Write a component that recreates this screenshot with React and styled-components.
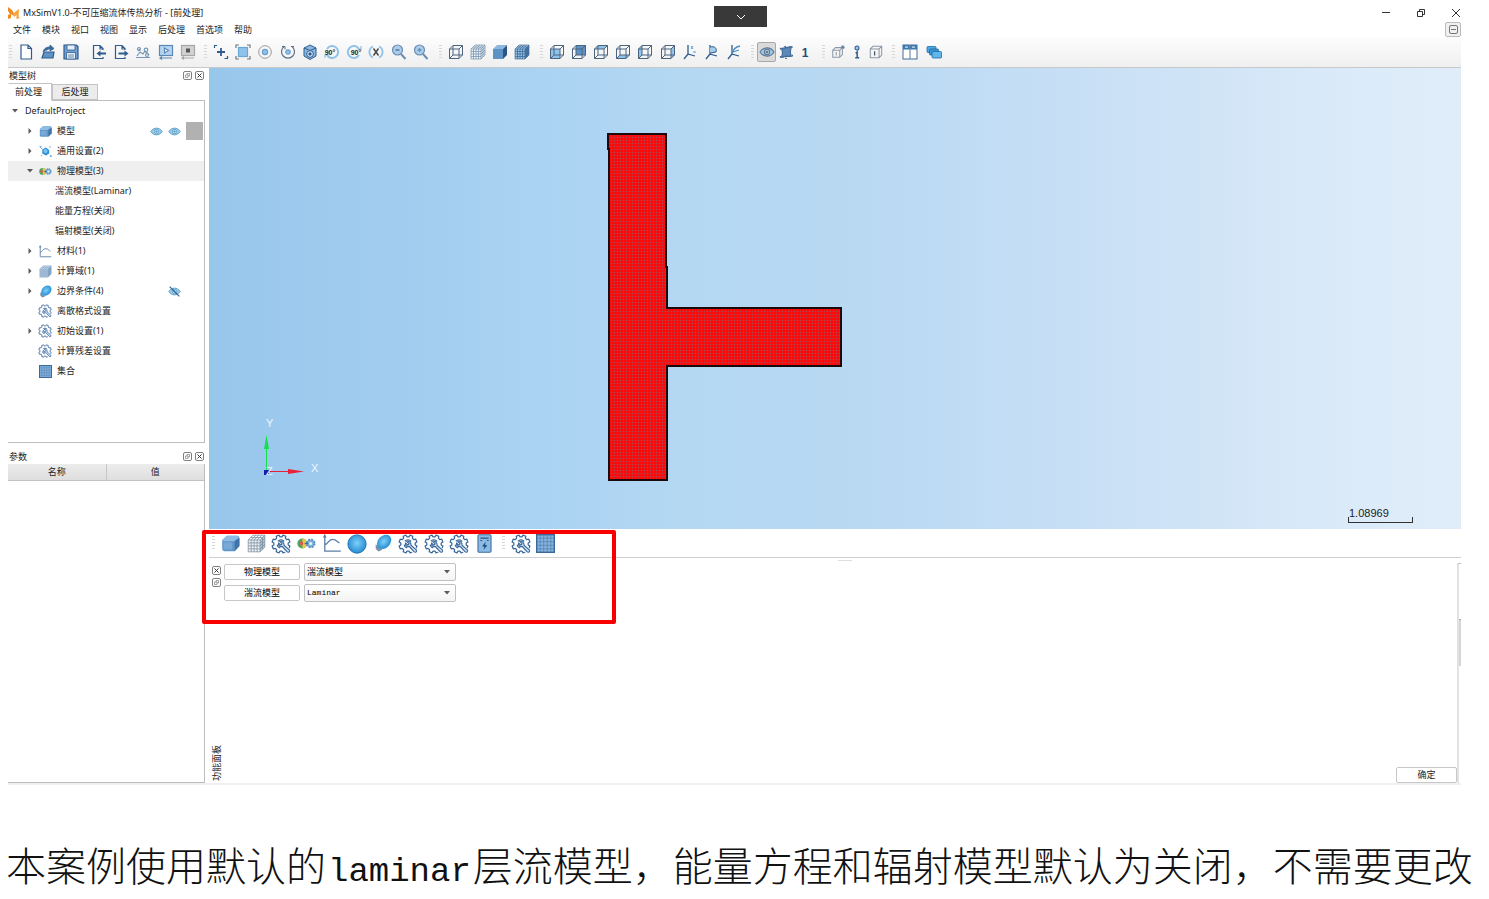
import React from "react";
import styled, { createGlobalStyle, css } from "styled-components";

const GlobalStyle = createGlobalStyle`
  *, *::before, *::after { box-sizing: border-box; }
  body {
    margin: 0;
    background: #fff;
    color: #222;
    font: 9px/12px "Noto Sans", "Noto Sans CJK SC", sans-serif;
  }
  button, select, input { font: inherit; color: inherit; margin: 0; }
`;

const ink = "#2f5c8f";
const wire = "#4c6480";
const sky = "#8fc3ea";

/* ---------- layout ---------- */

const Page = styled.div`
  display: flex;
  flex-direction: column;
  min-height: 100vh;
`;

const AppWindow = styled.main`
  position: relative;
  flex: 1;
  display: flex;
  flex-direction: column;
  margin: 0 28px 0 8px;
  border-bottom: 2px solid #efefef;
`;

const TitleBar = styled.header`
  display: flex;
  align-items: center;
  gap: 3px;
  height: 22px;
  padding-top: 4px;
`;

const Title = styled.h1`
  flex: 1;
  margin: 0;
  font-size: 9px;
  font-weight: 400;
`;

const WindowButtons = styled.div`
  display: flex;
  gap: 25px;
`;

const BareButton = styled.button`
  display: grid;
  place-items: center;
  width: 10px;
  height: 10px;
  padding: 0;
  border: 0;
  background: none;
`;

const MenuBar = styled.nav`
  display: flex;
  align-items: center;
  gap: 11px;
  height: 15px;
  padding-left: 5px;
`;

const MenuItem = styled.button`
  padding: 0;
  border: 0;
  background: none;
`;

const MdiButton = styled.button`
  display: grid;
  place-items: center;
  width: 16px;
  height: 15px;
  margin-left: auto;
  padding: 0;
  border: 1px solid #bcbcbc;
  border-radius: 2px;
  background: #f0f0f0;
`;

const PullTab = styled.button`
  position: absolute;
  top: 6px;
  left: 706px;
  display: grid;
  place-items: center;
  width: 53px;
  height: 21px;
  padding: 0;
  border: 0;
  background: #393939;
`;

const Toolbar = styled.div`
  display: flex;
  align-items: center;
  height: ${(p) => p.$height}px;
  flex: none;
  ${(p) =>
    p.$shaded &&
    css`
      background: linear-gradient(#fdfdfd, #efefef);
      border-bottom: 1px solid #c9c9c9;
    `}
`;

const Handle = styled.span`
  flex: none;
  width: ${(p) => p.$width}px;
  height: 14px;
  background: repeating-linear-gradient(#d6d6d6 0 1px, transparent 1px 3px) right 3px top / 3px 14px no-repeat;
`;

const Group = styled.div`
  display: grid;
  grid-auto-flow: column;
  grid-auto-columns: 1fr;
  width: ${(p) => p.$width}px;
`;

const ToolButton = styled.button`
  display: grid;
  place-items: center;
  height: 20px;
  padding: 0;
  border: 1px solid ${(p) => (p.$on ? "#a8a8a8" : "transparent")};
  border-radius: 2px;
  background: ${(p) => (p.$on ? "#dadada" : "none")};
`;

const Gap = styled.span`
  width: 6px;
`;

const Body = styled.div`
  flex: 1;
  display: flex;
  gap: 4px;
`;

const SideColumn = styled.aside`
  flex: none;
  display: flex;
  flex-direction: column;
  width: 197px;
`;

const MainColumn = styled.section`
  flex: 1;
  min-width: 0;
  display: flex;
  flex-direction: column;
`;

const PanelHead = styled.div`
  display: flex;
  align-items: center;
  gap: 2px;
  height: 15px;
  padding: 0 1px;
`;

const PanelTitle = styled.h2`
  flex: 1;
  margin: 0;
  font-size: 9px;
  font-weight: 400;
`;

const Tabs = styled.div`
  display: flex;
  align-items: flex-end;
  height: 17px;
`;

const Tab = styled.button`
  position: relative;
  width: ${(p) => (p.$active ? 44 : 46)}px;
  height: ${(p) => (p.$active ? 18 : 16)}px;
  padding: 0 ${(p) => (p.$active ? 3 : 0)}px 0 0;
  border: 1px solid #c4c4c4;
  border-bottom-color: ${(p) => (p.$active ? "#fff" : "#c4c4c4")};
  border-left-color: ${(p) => (p.$active ? "#fff" : "#c4c4c4")};
  background: ${(p) => (p.$active ? "#fff" : "#ececec")};
  margin-bottom: ${(p) => (p.$active ? -1 : 0)}px;
`;

const Tree = styled.ul`
  flex: 1;
  margin: 0 0 6px;
  padding: 0;
  list-style: none;
  border: 1px solid #bdbdbd;
  border-left: 0;
`;

const TreeRow = styled.li`
  display: flex;
  align-items: center;
  gap: 4px;
  height: 20px;
  padding: 0 1px 0 ${(p) => p.$indent}px;
  background: ${(p) => (p.$selected ? "#efefef" : "none")};
`;

const RootRow = styled(TreeRow)`
  gap: 7px;
`;

const TreeLabel = styled.span`
  flex: 1;
  white-space: nowrap;
`;

const Slot = styled.span`
  display: grid;
  place-items: center;
  width: ${(p) => p.$width}px;
`;

const RowEnd = styled.span`
  display: flex;
  align-items: center;
  gap: 5px;
`;

const Swatch = styled.span`
  width: 17px;
  height: 18px;
  background: #b1b1b1;
`;

const Params = styled.div`
  display: flex;
  flex-direction: column;
  height: 334px;
  flex: none;
`;

const ParamBody = styled.div`
  flex: 1;
  border-right: 1px solid #bdbdbd;
  border-bottom: 1px solid #bdbdbd;
`;

const ParamTable = styled.table`
  width: 100%;
  border-collapse: collapse;
  table-layout: fixed;

  th {
    height: 16px;
    padding: 0;
    font-weight: 400;
    background: linear-gradient(#ececec, #dedede);
    border-bottom: 1px solid #c2c2c2;
  }
  th + th { border-left: 1px solid #c6c6c6; }
`;

/* ---------- viewport ---------- */

const Viewport = styled.div`
  position: relative;
  flex: 1;
  min-height: 400px;
  background: linear-gradient(90deg, #98c7ec 0%, #9fcbee 12%, #add4f3 30%, #b4d8f2 38%, #bad9f3 54%, #cde2f6 76%, #dcebf9 92%, #e0edf9 100%);
`;

const Scene = styled.svg`
  position: absolute;
  inset: 0;
  width: 100%;
  height: 100%;
`;

const Triad = styled.svg`
  position: absolute;
  left: 48px;
  bottom: 48px;
`;

const ScaleBar = styled.div`
  position: absolute;
  right: 48px;
  bottom: 6px;
  width: 65px;
  height: 18px;
  padding-left: 1px;
  color: #222;
  font: 11px/16px "Liberation Sans", Arial, sans-serif;

  &::after {
    content: "";
    position: absolute;
    inset: 12px 0 0;
    border: 1px solid #333;
    border-top: 0;
  }
`;

/* ---------- dock ---------- */

const Dock = styled.section`
  position: relative;
  display: flex;
  flex-direction: column;
  height: 254px;
  flex: none;
`;

const Highlight = styled.div`
  position: absolute;
  top: 1px;
  left: -7px;
  width: 414px;
  height: 94px;
  border: 4px solid #f80000;
  border-radius: 2px;
  pointer-events: none;
`;

const DockBody = styled.div`
  flex: 1;
  display: flex;
  border-top: 1px solid #d0d0d0;
`;

const DockSide = styled.div`
  display: flex;
  flex-direction: column;
  align-items: center;
  gap: 2px;
  width: 15px;
  padding: 7px 0 2px;
`;

const SideTitle = styled.h2`
  margin: auto 0 0;
  font-size: 9px;
  font-weight: 400;
  line-height: 12px;
  writing-mode: vertical-rl;
  text-orientation: sideways;
  transform: rotate(180deg);
`;

const DockContent = styled.div`
  position: relative;
  flex: 1;
  display: flex;
  flex-direction: column;
  justify-content: space-between;
  padding: 5px 0 0;

  &::before {
    content: "";
    position: absolute;
    top: 2px;
    left: calc(50% - 3px);
    width: 14px;
    border-top: 1px solid #dedede;
  }
`;

const Form = styled.form`
  display: grid;
  grid-template-columns: 76px 152px;
  gap: 3px 4px;
`;

const FieldLabel = styled.label`
  display: grid;
  place-items: center;
  align-self: center;
  height: 16px;
  border: 1px solid #c8c8c8;
  border-radius: 2px;
  background: #fff;
  color: #000;
`;

const SelectBox = styled.div`
  display: grid;
  align-items: center;

  > * { grid-area: 1 / 1; }
  > svg { justify-self: end; margin-right: 6px; pointer-events: none; }
`;

const Select = styled.select`
  width: 100%;
  height: 18px;
  padding: 0 2px;
  appearance: none;
  border: 1px solid #c0c0c0;
  border-radius: 2px;
  background: linear-gradient(#fff, #f4f4f4);
  color: #000;
  ${(p) => p.$mono && css`font: 8px/12px "Liberation Mono", monospace;`}
`;

const OkButton = styled.button`
  align-self: flex-end;
  width: 61px;
  height: 16px;
  padding: 0;
  border: 1px solid #c8c8c8;
  border-radius: 2px;
  background: #fff;
`;

const ScrollTrack = styled.div`
  width: 4px;
  margin-top: 5px;
  padding-top: 55px;
  border-left: 2px solid #e2e2e2;
  border-top: 1px solid #bdbdbd;
`;

const ScrollThumb = styled.div`
  height: 47px;
  background: #d6d6d6;
  border-top: 1px solid #aaa;
`;

const Caption = styled.p`
  margin: 0;
  padding: 51px 0 0 6px;
  height: 114px;
  color: #111;
  font: 300 40px/56px "Noto Sans CJK SC", sans-serif;
  white-space: nowrap;
`;

const Latin = styled.span`
  margin: 0 2px;
  font: 400 34px/56px "Liberation Mono", monospace;
`;

/* ---------- icons ---------- */

const Ico = ({ size = 16, children, ...rest }) => (
  <svg width={size} height={size} viewBox="0 0 16 16" fill="none" stroke={ink} strokeWidth="1.2" aria-hidden="true" {...rest}>
    {children}
  </svg>
);

const FRONT = "1.5,5 11,5 11,14.5 1.5,14.5";
const BACK = "5,1.5 14.5,1.5 14.5,11 5,11";
const TOP = "1.5,5 5,1.5 14.5,1.5 11,5";
const BOTTOM = "1.5,14.5 5,11 14.5,11 11,14.5";
const LEFT = "1.5,5 5,1.5 5,11 1.5,14.5";
const RIGHT = "11,5 14.5,1.5 14.5,11 11,14.5";

const WireCube = ({ face, tone = sky }) => (
  <Ico stroke={wire} strokeWidth="1">
    {face && <polygon points={face} fill={tone} stroke="none" />}
    <polygon points={FRONT} />
    <polygon points={BACK} />
    <path d="M1.5 5L5 1.5M11 5l3.500-3.500M1.500 14.500L5 11M11 14.500l3.500-3.500" />
  </Ico>
);

const SolidCube = ({ size, front = "#5d92c6", top = "#8db7de", side = "#2c5585", mesh }) => (
  <Ico size={size} stroke="none">
    <polygon points="1,5 11,5 11,15 1,15" fill={front} />
    <polygon points="1,5 5,1 15,1 11,5" fill={top} />
    <polygon points="11,5 15,1 15,11 11,15" fill={side} />
    {mesh && (
      <path
        d="M1 5h10v10H1zM3.500 5v10M6 5v10M8.500 5v10M1 7.500h10l4-4M1 10h10l4-4M1 12.500h10l4-4M3.500 5l4-4M6 5l4-4M8.500 5l4-4M3 3h10v10M1 5l4-4h10v10l-4 4M11 5l4-4"
        stroke={mesh}
        strokeWidth=".6"
      />
    )}
  </Ico>
);

const RoundCube = ({ size }) => (
  <Ico size={size} stroke="none">
    <path d="M5 1.500h8.500q2 0 2 2V10l-4 4.500H3q-2 0-2-2V5z" fill="#5f95c9" />
    <path d="M1 5.500l4-4h8.500q1.500 0 1.700 1L11 6H2z" fill="#8fbce2" />
    <path d="M15.500 3.500V10l-4 4.500V6z" fill="#3f73aa" />
    <rect x="2" y="7" width="7.500" height="6" rx="1" fill="#77a8d6" />
  </Ico>
);

const gearPath = (() => {
  const pts = [];
  const teeth = 8;
  for (let i = 0; i < teeth; i++) {
    const a = ((i + 0.5) / teeth) * Math.PI * 2;
    [[-0.26, 5.8], [-0.16, 7.3], [0.16, 7.3], [0.26, 5.8]].forEach(([d, r]) =>
      pts.push(`${(8 + r * Math.cos(a + d)).toFixed(2)},${(8 + r * Math.sin(a + d)).toFixed(2)}`)
    );
  }
  return "M" + pts.join("L") + "Z";
})();

const GearWrench = ({ size }) => (
  <Ico size={size} stroke="#3b689a" strokeWidth="1" strokeLinejoin="round">
    <path d={gearPath} />
    <path d="M10.500 6A3.300 3.300 0 0 0 5.500 5.800M5 8.500a3.300 3.300 0 0 0 2.500 2.700" />
    <path d="M10.500 10.500l3.500 3.500" stroke="#fff" strokeWidth="4.500" strokeLinecap="round" />
    <path d="M7 6l1.900 1.700-1 1.200L6 7.200c-.3 2.200 1.400 3.300 3 2.800l4 4.300c1.200.8 2.400-.4 1.600-1.600L10.400 9C10.800 7 9 5.300 7 6z" strokeWidth=".9" fill="#cfe1f3" />
  </Ico>
);

const Grid = ({ size }) => (
  <Ico size={size} stroke="#39689b">
    <rect x=".6" y=".6" width="14.800" height="14.800" fill="#86b4de" />
    <path d="M3.500 1v14M6.500 1v14M9.500 1v14M12.500 1v14M1 3.500h14M1 6.500h14M1 9.500h14M1 12.500h14" strokeWidth=".4" />
  </Ico>
);

const Curve = ({ size }) => (
  <Ico size={size} stroke="#5d7fa5" strokeWidth="1.100">
    <path d="M1.500 1v13.500H15M1.500 9C4 9 4.500 4.500 8 4.500S12 7 14 7.500M.5 3l1-2 1 2" />
  </Ico>
);

const Physics = ({ size }) => (
  <Ico size={size} stroke="none">
    <circle cx="4.500" cy="8" r="4.200" fill="#47a86b" />
    <path d="M4.500 3.800a4.200 4.200 0 0 1 0 8.400z" fill="#e8c84c" />
    <circle cx="3.500" cy="8" r="1.800" fill="#d8604a" />
    <circle cx="11.500" cy="8" r="3.300" fill="#7db4dd" stroke="#4e8cbd" strokeWidth="1.400" strokeDasharray="1.600 1" />
    <circle cx="11.500" cy="8" r="1.300" fill="#e8f2fa" />
    <path d="M6.500 8h3" stroke="#3b6ea5" />
  </Ico>
);

const Disc = ({ size, tilt }) => (
  <Ico size={size} stroke="none">
    <defs>
      <radialGradient id="disc" cx=".5" cy=".45" r=".6">
        <stop offset="0" stopColor="#7fd0f7" />
        <stop offset="1" stopColor="#1c86cf" />
      </radialGradient>
    </defs>
    {tilt ? (
      <>
        <path d="M1.500 9l6 5-3.500 1.500L1.500 13z" fill="#7d93a8" />
        <ellipse cx="9" cy="7" rx="7.200" ry="5.400" transform="rotate(-45 9 7)" fill="url(#disc)" />
      </>
    ) : (
      <circle cx="8" cy="8" r="7.300" fill="url(#disc)" stroke="#2673b3" strokeWidth=".8" />
    )}
  </Ico>
);

const Spark = () => (
  <Ico size={13} stroke="none">
    <path d="M4 5.500l4.500-2.500 4 3v4.500l-4 2.500-4.500-2.500z" fill="#2f8fd4" />
    <circle cx="8" cy="7.500" r="2.600" fill="#7cc4f0" />
    <path d="M1 2l3 3M1 2h2" stroke="#5aa4dc" />
    <circle cx="13.500" cy="2.500" r="1" fill="#5aa4dc" />
    <circle cx="14.500" cy="13.500" r="1.300" fill="#5aa4dc" />
    <circle cx="3" cy="13" r=".8" fill="#5aa4dc" />
  </Ico>
);

const Eye = ({ off, size = 13, color = "#5a9fc9" }) => (
  <Ico size={size} stroke={color}>
    <path d="M1 8c3.500-5.500 10.500-5.500 14 0-3.500 5.500-10.500 5.500-14 0z" fill="#9fcdea" />
    <circle cx="8" cy="8" r="2.600" fill="#fff" />
    <circle cx="8" cy="8" r="1" fill={color} />
    {off && <path d="M2 2l12 12" stroke="#35658f" strokeWidth="1.600" />}
  </Ico>
);

const Calc = ({ size }) => (
  <Ico size={size} stroke="#3f6e9f" strokeWidth=".9">
    <rect x="2.500" y=".6" width="11" height="14.800" rx="1" fill="#8bbbe4" />
    <path d="M4.500 3.500h7M4.500 5.500h1.500M10 5.500h1.500" stroke="#2b5482" />
    <path d="M9 6.500l-3 4h2l-1 3 3.500-4h-2z" fill="#1f4a7c" stroke="none" />
  </Ico>
);

const Arrow = ({ open }) => (
  <svg width="6" height="6" viewBox="0 0 6 6" fill="#5a5a5a" aria-hidden="true">
    {open ? <path d="M0 1h6L3 4.500z" /> : <path d="M1.500 0v6L4.500 3z" />}
  </svg>
);

const TinyBox = ({ kind }) => (
  <svg width="9" height="9" viewBox="0 0 9 9" fill="none" stroke="#808080" aria-hidden="true">
    <rect x=".5" y=".5" width="8" height="8" rx="1.500" />
    {kind === "close" ? (
      <path d="M2.500 2.500l4 4M6.500 2.500l-4 4" stroke="#333" />
    ) : (
      <path d="M2.500 4h2.500v2.500h-2.500zM4 4V2.500h2.500V5H5" strokeWidth=".7" />
    )}
  </svg>
);

const Turn = ({ label, flip }) => (
  <Ico stroke={sky} strokeWidth="2">
    <path d={flip ? "M13 11A6 6 0 1 1 13 5" : "M3 5a6 6 0 1 1 0 6"} />
    <path d={flip ? "M11 5h4V2" : "M5 11H1v3"} strokeWidth="1.200" />
    <text x={flip ? 10 : 6} y="10.500" textAnchor="middle" fontSize="7" fontWeight="700" fontFamily="Liberation Sans" fill="#222" stroke="none">{label}</text>
  </Ico>
);

const Axes = ({ kind }) => (
  <Ico strokeWidth="1.300">
    <path d="M6 1v9l7 2M6 10l-4 5" />
    {kind === 0 && <path d="M9 2l2 3M11 2L9 5M11.500 7l2 2M13.500 7l-2 2" stroke="#5d9ccd" strokeWidth=".9" />}
    {kind === 1 && <path d="M6 3c5-1 7 1 6 5l-6 1" fill="#a7cdec" strokeWidth="1" />}
    {kind === 2 && <path d="M6 10c1-5 3-7 8-8M7 8l6-2" stroke="#4f8fc2" />}
  </Ico>
);

const NumberGlyph = () => (
  <Ico stroke="none">
    <text x="8" y="12.500" textAnchor="middle" fontSize="12" fontWeight="700" fontFamily="Liberation Sans" fill="#244b7a">1</text>
  </Ico>
);

const fileTools = [
  ["新建", <Ico><path d="M3 1h7l3.500 3.500V15H3zM10 1v3.500h3.500" fill="#fff" /></Ico>],
  ["打开", <Ico><path d="M2 14l2-6h10l-1 6z" fill="#5f93c4" /><path d="M3 8c1-4 4-5 7-5V1l4 3.500L10 7V5" fill="#3c6d9f" strokeWidth=".8" /></Ico>],
  ["保存", <Ico><path d="M1 1h12.500L15 2.500V15H1z" fill="#6e9fce" /><path d="M4 1h8v5H4zM3.500 8.500h9V15h-9z" fill="#e7f0f9" strokeWidth=".8" /><path d="M5 11h6M5 13h6" strokeWidth=".7" /></Ico>],
];
const ioTools = [
  ["导入", <Ico><path d="M12 6V4.500L9 1.500H2.500v13H12V13M9 1.500V5h3" /><path d="M15 9.500H8" strokeWidth="2" /><path d="M9.500 6.500v6l-4-3z" fill={ink} stroke="none" /></Ico>],
  ["导出", <Ico><path d="M12 6V4.500L9 1.500H2.500v13H12V13M9 1.500V5h3" /><path d="M5.500 9.500H12" strokeWidth="2" /><path d="M11.500 6.500v6l4-3z" fill={ink} stroke="none" /></Ico>],
  ["求解", <Ico stroke="#7797b9"><path d="M1 13.500h14M2 12l3-4 3 2 2-3 4 4M3 7l2-2" /><circle cx="4" cy="5" r="1.500" /><circle cx="11" cy="6" r="1.800" /><circle cx="12" cy="11" r="1.500" /></Ico>],
  ["运行", <Ico stroke="#5c88b5"><rect x="1.500" y="1.500" width="13" height="10" fill="#b4d4f0" /><path d="M6.500 4v5l4-2.500z" fill="#fff" /><path d="M2 14h12M4 12.500L2 14l2 1.500" /></Ico>],
  ["停止", <Ico stroke="#a7a7a7"><rect x="1.500" y="1.500" width="13" height="10" fill="#d2d2d2" /><rect x="6" y="4.500" width="4" height="4" fill="#555" stroke="none" /><path d="M2 14h12M4 12.500L2 14l2 1.500" /></Ico>],
];
const viewTools = [
  ["平移", <Ico><path d="M8 4v8M4 8h8" strokeWidth="1.800" /><path d="M1.500 4V1.500H4M11.500 14.500h3V12" /></Ico>],
  ["适应窗口", <Ico stroke="#777"><path d="M1 4V1h3M12 1h3v3M15 12v3h-3M4 15H1v-3" /><rect x="3.500" y="3.500" width="9" height="9" fill="#8fc3ea" stroke="#6aa6d6" /></Ico>],
  ["中心", <Ico stroke="#999"><circle cx="8" cy="8" r="6.300" strokeWidth="1" /><circle cx="8" cy="8" r="2.600" fill="#8fc3ea" stroke="#6a9fd0" /></Ico>],
  ["旋转", <Ico stroke="#5b6f86"><path d="M4 2.500A6.500 6.500 0 1 0 12 2.500" /><path d="M2 2.500h3v3M14 2.500h-3" strokeWidth="1" /><circle cx="8" cy="8" r="2.200" fill="#8fc3ea" stroke="#6a9fd0" /></Ico>],
  ["等轴测", <Ico strokeWidth="1"><path d="M2 4l6-3 6 3v8l-6 3.500L2 12z" fill="#8ab8e0" /><path d="M2 4l6 2.500L14 4" /><circle cx="8" cy="10" r="3.400" fill="#cfe3f5" /><circle cx="8" cy="10" r="1.200" fill={ink} /></Ico>],
  ["左转90°", <Turn label="90°" />],
  ["右转90°", <Turn label="90°" flip />],
  ["绕轴旋转", <Ico stroke={sky} strokeWidth="1.800"><path d="M5 13.500A6 6 0 0 1 5 2.500M11 2.500a6 6 0 0 1 0 11" /><path d="M5.500 4.500l5 7M10.500 4.500l-5 7" stroke="#444" strokeWidth="1.400" /></Ico>],
  ["缩小", <Ico stroke="#6b8fb2"><circle cx="6.500" cy="6" r="5" fill="#a9cdea" /><path d="M4.500 6h4M10 10l4.500 5" strokeWidth="2" /></Ico>],
  ["放大", <Ico stroke="#6b8fb2"><circle cx="6.500" cy="6" r="5" fill="#a9cdea" /><path d="M4.500 6h4M6.500 4v4" strokeWidth="1.300" /><path d="M10 10l4.500 5" strokeWidth="2" /></Ico>],
];
const renderTools = [
  ["线框", <WireCube />],
  ["网格线框", <SolidCube front="#eef3f8" top="#eef3f8" side="#dfe9f2" mesh="#5f809f" />],
  ["实体", <SolidCube />],
  ["实体网格", <SolidCube front="#8fbce3" top="#a9cdec" side="#5583b3" mesh="#305a88" />],
];
const faceTools = [
  ["前视", <WireCube face={FRONT} />],
  ["后视", <WireCube face={BACK} tone="#5f92c4" />],
  ["俯视", <WireCube face={TOP} />],
  ["仰视", <WireCube face={BOTTOM} />],
  ["左视", <WireCube face={LEFT} />],
  ["右视", <WireCube face={RIGHT} />],
  ["坐标系", <Axes kind={0} />],
  ["坐标平面", <Axes kind={1} />],
  ["坐标轴", <Axes kind={2} />],
];
const showTools = [
  ["显示", <Eye size={16} color="#5d7894" />, true],
  ["节点", <Ico size={14} stroke="#416b96"><path d="M3 4l5-1 6-1-1 6 1 5-6 0-5 1 1-5z" fill="#5c89b7" /><path d="M1 4h4M11.500 2.500h4M12 12h4M1 13.500h4M7 1v3M8 12v4" strokeWidth="2" strokeDasharray="1.500 1" /></Ico>],
  ["编号", <NumberGlyph />],
];
const pickTools = [
  ["单元编号", <Ico size={14} stroke="#8a98a8"><path d="M2 6h8v8H2zM2 6l3-3h8v8l-3 3M10 6l3-3M6 8v4" /><circle cx="13.500" cy="2.500" r="1.500" fill="#456c97" /></Ico>],
  ["节点编号", <Ico size={14}><circle cx="8" cy="3.500" r="2.300" fill="#9cc8ea" /><path d="M6.500 9.500L8.200 8v6.500M6 14.500h4.500" strokeWidth="1.700" /></Ico>],
  ["面编号", <Ico size={14} stroke="#8a98a8"><path d="M1.500 4.500h10v10h-10zM1.500 4.500l3-3h10v10l-3 3M11.500 4.500l3-3" /><path d="M6.500 7v5" stroke="#334" /></Ico>],
];
const windowTools = [
  ["布局", <Ico><rect x="1" y="1" width="14" height="14" fill="#fff" strokeWidth=".9" /><path d="M1 1h14v4.500H1z" fill="#3e78ad" stroke="none" /><path d="M8 1v14" stroke="#6d8dae" /><path d="M3 3.200h3M10 3.200h3" stroke="#cfe1f1" /></Ico>],
  ["层叠", <Ico strokeWidth=".8" stroke="#1d6aa8"><rect x="1" y="2.500" width="9" height="6" rx="1" fill="#4fa8e0" /><rect x="3.500" y="5" width="9" height="6" rx="1" fill="#3a94d2" /><rect x="6" y="7.500" width="9.500" height="6.500" rx="1" fill="#5fb7ea" /></Ico>],
];
const dockTools = [
  ["模型", <RoundCube size={19} />],
  ["网格", <SolidCube size={19} front="#f0f3f6" top="#f6f8fa" side="#b3c6d8" mesh="#74879a" />],
  ["通用设置", <GearWrench size={20} />],
  ["物理模型", <Physics size={19} />],
  ["材料", <Curve size={19} />],
  ["计算域", <Disc size={20} />],
  ["边界条件", <Disc size={18} tilt />],
  ["离散格式设置", <GearWrench size={20} />],
  ["初始设置", <GearWrench size={20} />],
  ["计算残差设置", <GearWrench size={20} />],
  ["求解计算", <Calc size={19} />],
];
const dockTools2 = [
  ["设置", <GearWrench size={20} />],
  ["集合", <Grid size={19} />],
];

const menus = ["文件", "模块", "视口", "视图", "显示", "后处理", "首选项", "帮助"];

const treeRows = [
  { label: "模型", arrow: "closed", icon: <RoundCube size={13} />, end: "model" },
  { label: "通用设置(2)", arrow: "closed", icon: <Spark /> },
  { label: "物理模型(3)", arrow: "open", icon: <Physics size={13} />, selected: true },
  { label: "湍流模型(Laminar)", leaf: true },
  { label: "能量方程(关闭)", leaf: true },
  { label: "辐射模型(关闭)", leaf: true },
  { label: "材料(1)", arrow: "closed", icon: <Curve size={13} /> },
  { label: "计算域(1)", arrow: "closed", icon: <SolidCube size={13} front="#a9c4de" top="#c6d8e9" side="#7f9fbe" mesh="#8eabc6" /> },
  { label: "边界条件(4)", arrow: "closed", icon: <Disc size={13} tilt />, end: "hidden" },
  { label: "离散格式设置", icon: <GearWrench size={14} /> },
  { label: "初始设置(1)", arrow: "closed", icon: <GearWrench size={14} /> },
  { label: "计算残差设置", icon: <GearWrench size={14} /> },
  { label: "集合", icon: <Grid size={13} /> },
];

const Tools = ({ items, width }) => (
  <Group $width={width}>
    {items.map(([name, icon, on], i) => (
      <ToolButton key={i} type="button" aria-label={name} $on={on}>{icon}</ToolButton>
    ))}
  </Group>
);

const PanelButtons = () => (
  <>
    <BareButton type="button" aria-label="浮动"><TinyBox kind="float" /></BareButton>
    <BareButton type="button" aria-label="关闭"><TinyBox kind="close" /></BareButton>
  </>
);

const Field = ({ id, label, options, mono }) => (
  <>
    <FieldLabel htmlFor={id}>{label}</FieldLabel>
    <SelectBox>
      <Select id={id} $mono={mono}>
        {options.map((o) => <option key={o}>{o}</option>)}
      </Select>
      <Arrow open />
    </SelectBox>
  </>
);

const ModelTree = () => (
  <Tree>
    <RootRow $indent={4}>
      <Arrow open />
      <TreeLabel>DefaultProject</TreeLabel>
    </RootRow>
    {treeRows.map((r) => (
      <TreeRow key={r.label} $indent={r.leaf ? 47 : 19} $selected={r.selected}>
        {!r.leaf && (
          <>
            <Slot $width={6}>{r.arrow && <Arrow open={r.arrow === "open"} />}</Slot>
            <Slot $width={16}>{r.icon}</Slot>
          </>
        )}
        <TreeLabel>{r.label}</TreeLabel>
        {r.end === "model" && <RowEnd><Eye /><Eye /><Swatch /></RowEnd>}
        {r.end === "hidden" && <RowEnd><Eye off /><Slot $width={17} /></RowEnd>}
      </TreeRow>
    ))}
  </Tree>
);

const MeshScene = () => (
  <Scene viewBox="0 0 1252 461" preserveAspectRatio="xMidYMid meet" aria-hidden="true">
    <defs>
      <pattern id="mesh" width="3" height="3" patternUnits="userSpaceOnUse">
        <rect width="3" height="3" fill="#ff0808" />
        <path d="M0 .5h3M.5 0v3" stroke="#e01a1e" strokeWidth="1" />
        <rect width="1" height="1" fill="#ab4a4e" />
      </pattern>
    </defs>
    <path d="M399 66H457V199H458V240H632V298H458V412H400V81H399z" fill="url(#mesh)" stroke="#1a0a0c" strokeWidth="2" />
  </Scene>
);

const AxisTriad = () => (
  <Triad width="64" height="66" viewBox="0 0 64 66" aria-hidden="true" fontFamily="Liberation Sans" fontSize="11" fill="#eef6fd">
    <path d="M9.500 56V30" stroke="#14e04a" />
    <path d="M7 34l2.500-14 2.500 14z" fill="#14e04a" />
    <path d="M10 56.500h22" stroke="#e8203a" />
    <path d="M31 54l16 2.500L31 59z" fill="#e8203a" />
    <rect x="7" y="55" width="5" height="5" fill="#1a1fa8" />
    <text x="9" y="12">Y</text>
    <text x="9" y="60">Z</text>
    <text x="54" y="57">X</text>
  </Triad>
);

export default function App() {
  return (
    <Page lang="zh-CN">
      <GlobalStyle />
      <AppWindow>
        <TitleBar>
          <svg width="12" height="12" viewBox="0 0 12 12" aria-hidden="true">
            <path d="M0 0l4 3 2 3.500-1 2L3 7v4L0 12V8l2-1L0 4z" fill="#f08a24" />
            <path d="M11 2L7 5 5 8l1 2 2.500-2v4l3.500-1-1.500-1.500z" fill="#f7a23b" />
          </svg>
          <Title>MxSimV1.0-不可压缩流体传热分析 - [前处理]</Title>
          <WindowButtons>
            <BareButton type="button" aria-label="最小化">
              <svg width="10" height="10" stroke="#333"><path d="M1 4.500h8" /></svg>
            </BareButton>
            <BareButton type="button" aria-label="还原">
              <svg width="10" height="10" stroke="#333" fill="none"><path d="M1.500 3.500h5v5h-5zM3.500 3V1.500h5v5H7" /></svg>
            </BareButton>
            <BareButton type="button" aria-label="关闭">
              <svg width="10" height="10" stroke="#333"><path d="M1 1l8 8M9 1L1 9" /></svg>
            </BareButton>
          </WindowButtons>
        </TitleBar>
        <MenuBar>
          {menus.map((m) => <MenuItem key={m} type="button">{m}</MenuItem>)}
          <MdiButton type="button" aria-label="最小化子窗口">
            <svg width="9" height="9" fill="none" stroke="#777"><rect x=".5" y=".5" width="8" height="8" rx="1.500" /><path d="M2 4.500h5" /></svg>
          </MdiButton>
        </MenuBar>
        <PullTab type="button" aria-label="展开">
          <svg width="10" height="6" fill="none" stroke="#fff"><path d="M1 1l4 4 4-4" /></svg>
        </PullTab>

        <Toolbar $height={31} $shaded>
          <Handle $width={7} />
          <Tools items={fileTools} width={67} />
          <Gap />
          <Tools items={ioTools} width={111} />
          <Handle $width={11} />
          <Tools items={viewTools} width={222} />
          <Handle $width={13} />
          <Tools items={renderTools} width={88} />
          <Handle $width={13} />
          <Tools items={faceTools} width={199} />
          <Handle $width={12} />
          <Tools items={showTools} width={58} />
          <Handle $width={13} />
          <Tools items={pickTools} width={57} />
          <Handle $width={13} />
          <Tools items={windowTools} width={48} />
        </Toolbar>

        <Body>
          <SideColumn>
            <PanelHead>
              <PanelTitle>模型树</PanelTitle>
              <PanelButtons />
            </PanelHead>
            <Tabs role="tablist">
              <Tab type="button" role="tab" aria-selected="true" $active>前处理</Tab>
              <Tab type="button" role="tab" aria-selected="false">后处理</Tab>
            </Tabs>
            <ModelTree />
            <Params>
              <PanelHead>
                <PanelTitle>参数</PanelTitle>
                <PanelButtons />
              </PanelHead>
              <ParamBody>
                <ParamTable>
                  <thead><tr><th scope="col">名称</th><th scope="col">值</th></tr></thead>
                </ParamTable>
              </ParamBody>
            </Params>
          </SideColumn>

          <MainColumn>
            <Viewport>
              <MeshScene />
              <AxisTriad />
              <ScaleBar>1.08969</ScaleBar>
            </Viewport>
            <Dock>
              <Toolbar $height={28}>
                <Handle $width={9} />
                <Tools items={dockTools} width={279} />
                <Handle $width={11} />
                <Tools items={dockTools2} width={50} />
              </Toolbar>
              <DockBody>
                <DockSide>
                  <BareButton type="button" aria-label="关闭"><TinyBox kind="close" /></BareButton>
                  <BareButton type="button" aria-label="浮动"><TinyBox kind="float" /></BareButton>
                  <SideTitle>功能面板</SideTitle>
                </DockSide>
                <DockContent>
                  <Form>
                    <Field id="physics" label="物理模型" options={["湍流模型", "能量方程", "辐射模型"]} />
                    <Field id="turbulence" label="湍流模型" options={["Laminar"]} mono />
                  </Form>
                  <OkButton type="button">确定</OkButton>
                </DockContent>
                <ScrollTrack><ScrollThumb /></ScrollTrack>
              </DockBody>
              <Highlight />
            </Dock>
          </MainColumn>
        </Body>
      </AppWindow>
      <Caption>
        本案例使用默认的<Latin>laminar</Latin>层流模型，能量方程和辐射模型默认为关闭，不需要更改
      </Caption>
    </Page>
  );
}
